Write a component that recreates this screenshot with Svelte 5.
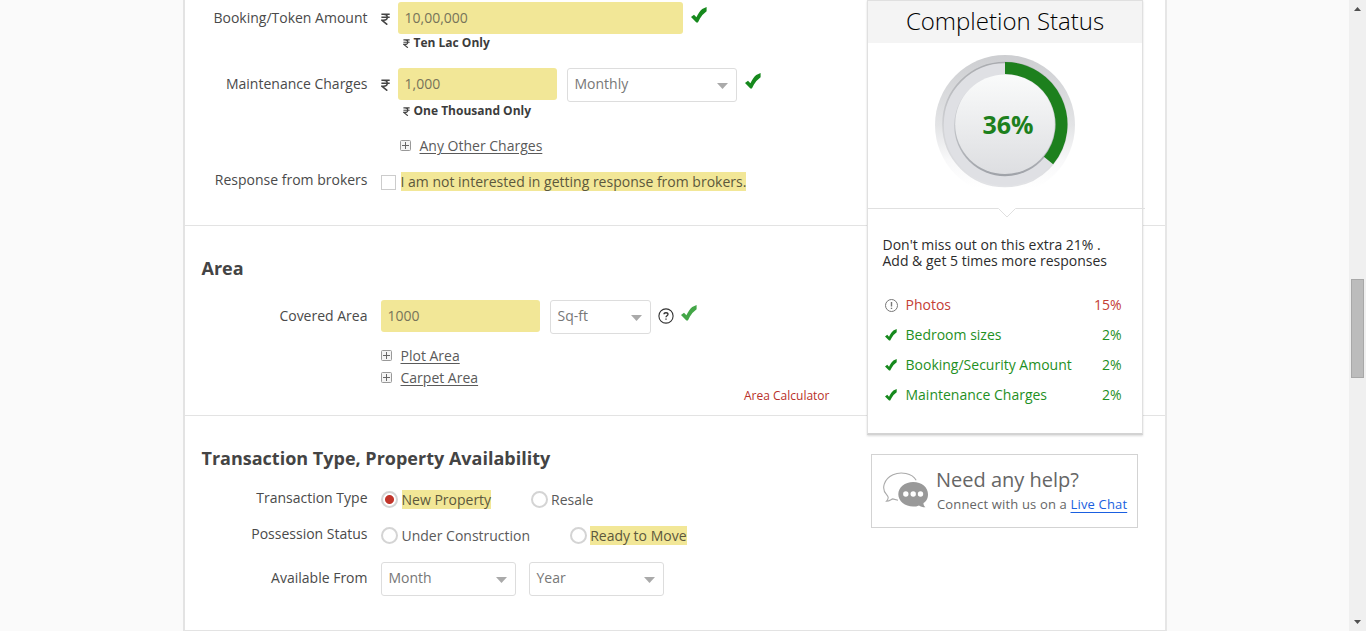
<script>
  const progress = 36;
  const angle = (progress / 100) * 2 * Math.PI;
  const arcX = 70 + 56.5 * Math.sin(angle);
  const arcY = 69.5 - 56.5 * Math.cos(angle);
  const items = [
    { name: 'Photos', value: '15%', missing: true },
    { name: 'Bedroom sizes', value: '2%' },
    { name: 'Booking/Security Amount', value: '2%' },
    { name: 'Maintenance Charges', value: '2%' }
  ];
</script>

{#snippet tick(w, h, color)}
  <svg class="tick" width={w} height={h} viewBox="0 0 16 16" preserveAspectRatio="none">
    <path d="M0 10 3 7.8 5.4 10.2C7.2 6.6 9 3.8 11.2 2L15.6 0V4.2L11.4 8C9.6 10.4 8.2 12.8 6.9 15.4H5.4Z" fill={color} />
  </svg>
{/snippet}

{#snippet rupee(w, h)}
  <svg class="rupee" width={w} height={h} viewBox="0 0 9 12" fill="none" stroke="#444" stroke-width="1.5">
    <path d="M.4 1.2H8.7M.4 4.3H8.7M.4 1.2H2.5C7.5 1.2 7.5 7.2 2.5 7.2H.8L6.3 11.7" />
  </svg>
{/snippet}

{#snippet plus()}
  <svg class="plus" width="11" height="11" viewBox="0 0 11 11" fill="none">
    <rect x=".5" y=".5" width="10" height="10" rx="1" fill="#f4f4f4" stroke="#999" />
    <path d="M2 5.5H9M5.5 2V9" stroke="#666" />
  </svg>
{/snippet}

{#snippet select(text, width)}
  <div class="select" style="width:{width}px">
    <span>{text}</span>
    <svg width="11" height="6" viewBox="0 0 11 6"><path d="M0 0H11L5.5 6Z" fill="#aaa" /></svg>
  </div>
{/snippet}

<div class="page">
  <main>
    <section class="charges">
      <div class="row booking">
        <div class="label">Booking/Token Amount</div>
        <div class="field">
          {@render rupee(9, 12)}
          <div class="input wide">10,00,000</div>
          {@render tick(16, 16, '#16891d')}
        </div>
      </div>
      <div class="hint">{@render rupee(7, 9)}<b>Ten Lac Only</b></div>
      <div class="row maintenance">
        <div class="label">Maintenance Charges</div>
        <div class="field">
          {@render rupee(9, 12)}
          <div class="input">1,000</div>
          {@render select('Monthly', 170)}
          {@render tick(16, 16, '#16891d')}
        </div>
      </div>
      <div class="hint">{@render rupee(7, 9)}<b>One Thousand Only</b></div>
      <div class="more other">{@render plus()}<a href="#other">Any Other Charges</a></div>
      <div class="row brokers">
        <div class="label">Response from brokers</div>
        <div class="options"><i class="checkbox"></i><span class="mark">I am not interested in getting response from brokers.</span></div>
      </div>
    </section>

    <section class="area">
      <h2>Area</h2>
      <div class="row">
        <div class="label">Covered Area</div>
        <div class="field">
          <div class="input">1000</div>
          {@render select('Sq-ft', 101)}
          <svg class="help" width="16" height="16" viewBox="0 0 16 16" fill="none" stroke="#333">
            <circle cx="8" cy="8" r="7.1" stroke-width="1.1" />
            <path d="M6 6.3C6 4.2 10 4.2 10 6.3C10 7.7 8 7.8 8 9.3M8 10.4V11.7" stroke-width="1.3" />
          </svg>
          {@render tick(16, 16, '#43a647')}
        </div>
      </div>
      <div class="more plot">{@render plus()}<a href="#plot">Plot Area</a></div>
      <div class="more">{@render plus()}<a href="#carpet">Carpet Area</a></div>
      <div class="calculator">Area Calculator</div>
    </section>

    <section class="transaction">
      <h2>Transaction Type, Property Availability</h2>
      <div class="row type">
        <div class="label">Transaction Type</div>
        <div class="options">
          <i class="radio on"></i><span class="mark">New Property</span>
          <i class="radio later"></i><span>Resale</span>
        </div>
      </div>
      <div class="row type">
        <div class="label">Possession Status</div>
        <div class="options">
          <i class="radio"></i><span>Under Construction</span>
          <i class="radio later"></i><span class="mark">Ready to Move</span>
        </div>
      </div>
      <div class="row">
        <div class="label">Available From</div>
        <div class="field dates">{@render select('Month', 135)}{@render select('Year', 135)}</div>
      </div>
    </section>

    <aside>
      <div class="card">
        <h3>Completion Status</h3>
        <div class="gauge">
          <svg width="140" height="140" viewBox="0 0 140 140">
            <defs>
              <linearGradient id="rim" x1="0" y1="0" x2="0" y2="1">
                <stop offset="0" stop-color="#cdced1" /><stop offset=".5" stop-color="#e3e4e6" />
                <stop offset=".75" stop-color="#f8f8f9" /><stop offset=".95" stop-color="#fff" />
              </linearGradient>
              <linearGradient id="edge" x1="0" y1="0" x2="0" y2="1">
                <stop offset="0" stop-color="#a9abaf" /><stop offset=".55" stop-color="#d3d4d7" /><stop offset="1" stop-color="#e2e3e6" />
              </linearGradient>
              <linearGradient id="disc" x1="0" y1="0" x2="0" y2="1">
                <stop offset="0" stop-color="#fafbfb" /><stop offset="1" stop-color="#dddee1" />
              </linearGradient>
              <linearGradient id="lip" x1="0" y1="0" x2="0" y2="1">
                <stop offset="0" stop-color="#e0e1e4" /><stop offset=".5" stop-color="#c4c6ca" /><stop offset="1" stop-color="#9fa2a8" />
              </linearGradient>
            </defs>
            <circle cx="70" cy="70" r="70" fill="url(#rim)" />
            <circle cx="70" cy="69.5" r="62" fill="#dfe0e4" stroke="url(#edge)" stroke-width="1.6" />
            <circle cx="70" cy="70.4" r="50.8" fill="url(#lip)" />
            <circle cx="70" cy="69.2" r="49.8" fill="url(#disc)" />
            <path d="M70 13A56.5 56.5 0 0 1 {arcX} {arcY}" fill="none" stroke="#1d801d" stroke-width="12" />
          </svg>
          <strong>{progress}%</strong>
        </div>
        <svg class="notch" width="277" height="12" viewBox="0 0 277 12" fill="none">
          <path d="M0 1.5H130.5L139 10L147.5 1.5H277" stroke="#e0e0e0" />
        </svg>
        <p>Don't miss out on this extra 21% .<br />Add &amp; get 5 times more responses</p>
        <ul>
          {#each items as item}
            <li class:missing={item.missing}>
              {#if item.missing}
                <svg width="13" height="13" viewBox="0 0 13 13" fill="none" stroke="#777">
                  <circle cx="6.5" cy="6.5" r="6" /><path d="M6.5 3V7.6M6.5 8.7V10" stroke-width="1.4" />
                </svg>
              {:else}
                {@render tick(12, 12, '#16891d')}
              {/if}
              <span>{item.name}</span><em>{item.value}</em>
            </li>
          {/each}
        </ul>
      </div>
      <div class="chat">
        <svg width="46" height="36" viewBox="0 0 46 36">
          <path d="M33.2 8.2C29 1.2 17.8-.8 10 2.8C.8 7-2 17 3.6 22.7C5.5 24.8 6 26 3.4 29.3C7 29 8.2 27.2 9.8 26.9L15 28.2" fill="none" stroke="#aaa" stroke-width="1.1" />
          <path d="M30.2 10C38.8 10 45 15.3 45 22.2C45 25.5 44 28.8 40.5 31C40.3 32.5 41 34 42.4 35.3C39.5 35.3 37.5 34.4 36 33.4C34.2 34.2 32.2 34.6 30.2 34.6C22 34.6 15.3 29.2 15.3 22.3S22 10 30.2 10Z" fill="#999" />
          <g fill="#fff"><circle cx="22.8" cy="22" r="2.7" /><circle cx="30.2" cy="22" r="2.7" /><circle cx="37.5" cy="22" r="2.7" /></g>
        </svg>
        <div>
          <h4>Need any help?</h4>
          <p>Connect with us on a <a href="#chat">Live Chat</a></p>
        </div>
      </div>
    </aside>
  </main>
  <div class="scrollbar">
    <svg width="7" height="4" viewBox="0 0 7 4"><path d="M0 4H7L3.5 0Z" fill="#505050" /></svg>
    <div class="thumb"></div>
    <svg width="7" height="4" viewBox="0 0 7 4"><path d="M0 0H7L3.5 4Z" fill="#505050" /></svg>
  </div>
</div>

<style>
  :global(body) { margin: 0; overflow: hidden; }
  .page, .page * { box-sizing: border-box; }
  .page {
    display: flex; width: 1366px; height: 631px; overflow: hidden; padding-left: 183px;
    background: #fafafa; color: #4a4a4a; font: 14px/20px "Open Sans", sans-serif;
  }
  svg { display: block; flex: none; }
  main {
    position: relative; width: 984px; height: 631px; background: #fff;
    border: solid #e3e3e3; border-width: 0 2px 1px; border-right-color: #e6e6e6;
  }
  section { border-bottom: 1px solid #e3e3e3; }
  .charges { height: 226px; padding-top: 2px; }
  .area { height: 190px; padding-top: 30px; }
  .transaction { height: 214px; padding-top: 30px; border: 0; }
  .row { display: grid; grid-template-columns: 182.5px 1fr; column-gap: 13.5px; }
  .label { text-align: right; line-height: 32px; }
  .field { display: flex; align-items: flex-start; }
  .field .rupee { margin: 11px 8px 0 0; }
  .field .tick { margin: 5px 0 0 7.5px; }
  .input {
    width: 159px; height: 32px; padding-left: 6.5px; border-radius: 3px;
    background: #f2e797; color: #77745a; line-height: 32px;
  }
  .wide { width: 285px; }
  .select {
    display: flex; justify-content: space-between; align-items: flex-start; height: 34px;
    margin-left: 10px; padding: 0 8px 0 6.5px; border: 1px solid #ddd; border-radius: 3px;
    background: #fff; color: #777; line-height: 30px;
  }
  .select svg { margin-top: 14px; }
  .hint { display: flex; align-items: center; gap: 4px; height: 18px; padding-left: 217.5px; font-size: 12px; line-height: 18px; color: #3c3c3c; }
  .maintenance { margin-top: 16px; }
  .more { display: flex; align-items: center; gap: 8.5px; height: 22px; padding-left: 196px; }
  .more a, .options span { color: #5a5a5a; }
  .more a { text-underline-offset: 2px; }
  .more .plus { margin-top: -1px; }
  .other { padding-left: 215px; margin-top: 15px; }
  .brokers { margin-top: 7px; }
  .options { display: flex; align-items: center; height: 20px; }
  .options span { line-height: 19px; }
  .options .mark { background: #f2e797; color: #5c583c; }
  .brokers .options { height: 35px; }
  .checkbox { width: 15px; height: 15px; margin: 2px 4.5px 0 0; border: 1px solid #ccc; background: #fff; }
  h2 { margin: 0 0 19px 16.5px; font-size: 18px; line-height: 25px; font-weight: 700; color: #444; }
  .help { margin: 8px 0 0 7px; }
  .area .tick { margin-left: 7px; }
  .plot { margin-top: 11px; }
  .calculator { margin: -2px 0 0 559px; font-size: 12px; line-height: 18px; color: #b8302a; }
  .transaction h2 { margin-bottom: 17px; }
  .type { height: 36px; }
  .type .label { line-height: 20px; }
  .type .options { height: 23px; }
  .radio { flex: none; width: 17px; height: 17px; margin-right: 3.5px; border: 2px solid #d4d4d4; border-radius: 50%; }
  .on { background: radial-gradient(circle, #c2352b 4px, transparent 5px); }
  .later { margin-left: 39.5px; }
  .dates .select:first-child { margin-left: 0; }
  .dates .select { margin-left: 13px; }
  .transaction > .row:last-child { margin-top: 2px; }
  aside { position: absolute; left: 682px; top: 0; width: 278px; }
  .card {
    width: 276px; height: 435px; background: #fff; border: 1px solid #e0e0e0;
    border-bottom: 2px solid #d3d3d3; box-shadow: 0 1px 2px #00000026; color: #2c2c2c;
  }
  h3 { margin: 0; height: 42px; background: #f4f4f4; text-align: center; font-size: 24px; line-height: 39px; font-weight: 300; color: #000; }
  .gauge { display: grid; place-items: center; height: 140px; margin: 12px 0 12px; }
  .gauge > * { grid-area: 1 / 1; }
  .gauge strong { padding: 0 0 2px 6px; font-size: 25px; color: #1d801d; }
  .card p { margin: 18px 0 0 14.5px; line-height: 16px; }
  ul { list-style: none; margin: 21px 20.5px 0 17px; padding: 0; }
  li { display: flex; align-items: center; height: 30px; color: #1f901f; }
  li .tick { margin-right: 1px; }
  li span { flex: 1; margin-left: 7.5px; }
  li em { font-style: normal; }
  li.missing { color: #c44035; }
  .chat { display: flex; width: 267px; height: 74px; margin: 19px 0 0 4px; padding: 17px 0 0 11px; border: 1px solid #d3d3d3; color: #666; }
  .chat h4 { margin: -6px 0 1px -1px; font-size: 20px; line-height: 27px; font-weight: 400; }
  .chat div { margin-left: 8px; white-space: nowrap; }
  .chat p { margin: 0; font-size: 13px; line-height: 20px; letter-spacing: .16px; }
  .chat a { color: #1a5fe0; text-underline-offset: 3px; }
  .scrollbar {
    display: flex; flex-direction: column; align-items: center; width: 17px; margin-left: auto;
    padding: 7px 0; background: #f0f0f0;
  }
  .thumb { width: 13px; height: 99px; margin: 268px 0 auto 0; background: #bcbcbc; border: 1px solid #a8a8a8; }
</style>
